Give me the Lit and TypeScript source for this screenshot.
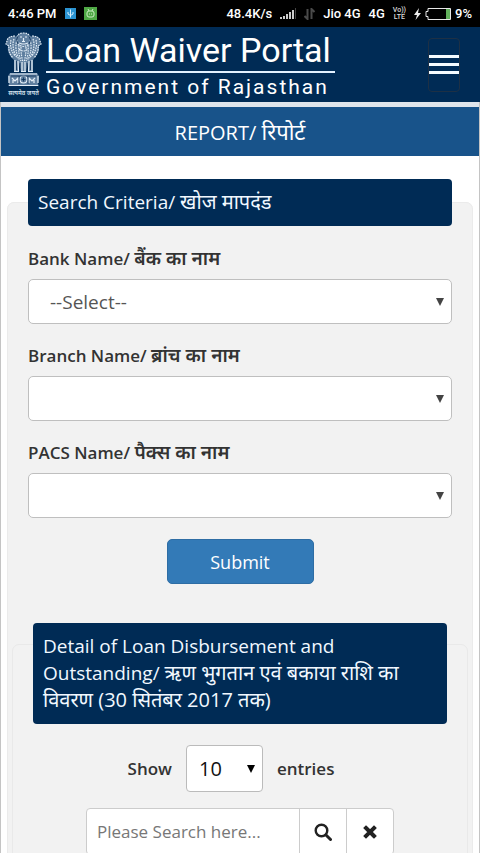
import { LitElement, html, css } from "lit";
import { customElement } from "lit/decorators.js";

const arrow = html`<svg class="arrow" viewBox="0 0 8 8" aria-hidden="true"><path d="M0 0H8L4 8Z" /></svg>`;

const fonts = css`
  * {
    box-sizing: border-box;
  }
  button,
  input,
  select {
    font-family: inherit;
    margin: 0;
  }
`;

@customElement("status-bar")
class StatusBar extends LitElement {
  static styles = [
    fonts,
    css`
      :host {
        display: flex;
        justify-content: space-between;
        align-items: center;
        height: 27px;
        padding: 0 8px;
        background: #000;
        color: #fff;
        font: 500 13px/20px Roboto, sans-serif;
        white-space: nowrap;
      }
      .group {
        display: flex;
        align-items: center;
        gap: 8px;
      }
      .group svg {
        display: block;
        flex: none;
      }
      .power {
        display: flex;
        align-items: center;
        gap: 4px;
      }
      .volte {
        font-size: 7px;
        line-height: 7px;
        text-align: center;
        color: #ddd;
      }
      .volte span {
        display: block;
      }
    `,
  ];
  render() {
    return html`
      <div class="group">
        <span>4:46 PM</span>
        <svg width="11" height="11" viewBox="0 0 11 11">
          <rect width="11" height="11" fill="#2b93d1" />
          <path d="M5.500 1.500V9.500M3 4V6L5.500 7.500L8 6V4" fill="none" stroke="#d8effc" />
        </svg>
        <svg width="13" height="13" viewBox="0 0 13 13">
          <rect width="13" height="13" fill="#4fa845" />
          <rect x="3" y="4" width="7" height="6" rx="2" fill="none" stroke="#cdeec5" />
          <path d="M4 2L5 4M9 2L8 4M5 7H6M7 7H8" stroke="#cdeec5" />
        </svg>
      </div>
      <div class="group">
        <span>48.4K/s</span>
        <svg width="16" height="11" viewBox="0 0 16 11">
          <path d="M0 9H2V11H0ZM3 8H5V11H3ZM6 6H8V11H6ZM9 4H11V11H9ZM12 2H14V11H12Z" fill="#ccc" />
          <path d="M15 0H16V11H15Z" fill="#444" />
        </svg>
        <svg width="11" height="12" viewBox="0 0 11 12" fill="none" stroke="#4a4a4a" stroke-width="2">
          <path d="M3.500 1V11L0.500 8M7.500 11V1L10.500 4" />
        </svg>
        <span>Jio 4G</span>
        <span>4G</span>
        <div class="volte"><span>Vo))</span><span>LTE</span></div>
        <div class="power">
          <svg width="7" height="12" viewBox="0 0 7 12"><path d="M5 0L0 7H3L1.500 12L7 5H4Z" fill="#eee" /></svg>
          <svg width="26" height="12" viewBox="0 0 26 12">
            <path d="M3 .5H25.500V11.500H3V8.500H1V3.500H3Z" fill="none" stroke="#e8e8e8" />
            <rect x="21" y="1" width="4" height="10" fill="#62b15c" />
          </svg>
          <span>9%</span>
        </div>
      </div>
    `;
  }
}

@customElement("site-header")
class SiteHeader extends LitElement {
  static styles = [
    fonts,
    css`
      :host {
        display: flex;
        align-items: center;
        height: 75px;
        padding: 0 20px 0 5px;
        background: #002b55;
        color: #fff;
        font-family: Roboto, sans-serif;
      }
      .emblem {
        display: flex;
        flex-direction: column;
        align-items: center;
        width: 37px;
        margin-right: 4px;
        color: #d3e1ee;
        font: 600 6px/8px "Noto Sans", sans-serif;
        white-space: nowrap;
      }
      h1,
      p {
        margin: 0;
        padding-right: 4px;
        font-weight: 400;
        white-space: nowrap;
      }
      h1 {
        padding-bottom: 2px;
        border-bottom: 2px solid #e2f1ff;
        font-size: 34px;
        line-height: 38px;
      }
      p {
        font-size: 21px;
        line-height: 24px;
        padding-top: 2px;
        letter-spacing: 2px;
      }
      .menu {
        display: flex;
        flex-direction: column;
        justify-content: center;
        gap: 5px;
        width: 32px;
        height: 54px;
        margin-left: auto;
        padding: 0;
        border: 1px solid #1d3045;
        border-radius: 4px;
        background: none;
      }
      .menu span {
        height: 3px;
        background: #f4fbff;
      }
    `,
  ];
  render() {
    return html`
      <div class="emblem">
        <svg width="37" height="57" viewBox="0 0 37 57" aria-hidden="true">
          <g fill="#5f7f9f">
            <path d="M12 5Q13 1 18.500 1Q24 1 25 5L28 4Q34 4 35 9L36 12L34 14Q35 20 30 25L28 28V40H24L23 31L21 40H16L14 31L13 40H9V28L6 25Q2 20 3 14L1 12L2 9Q3 4 9 4Z" />
            <path d="M5 41H32L34 44L33 52L34 54H3L4 52L3 44Z" />
          </g>
          <g fill="none" stroke="#e4eef7" stroke-width="1.200" stroke-dasharray="1.600 .9">
            <path d="M12 5Q13 1 18.500 1Q24 1 25 5M10 4Q3 4 2 9L1 12L4 14Q3 20 8 26M27 4Q34 4 35 9L36 12L33 14Q34 20 29 26" />
            <path d="M6 8Q4 16 10 24M31 8Q33 16 27 24M9 7Q6 15 12 26M28 7Q31 15 25 26M12 8Q9 16 14 28M25 8Q28 16 23 28" />
            <path d="M14 13Q13 22 16 29M23 13Q24 22 21 29M16 15Q16 24 18 30M21 15Q21 24 19 30M13 12Q18.500 17 24 12M14 17Q18.500 21 23 17" />
          </g>
          <g fill="none" stroke="#e4eef7" stroke-width="1.200">
            <path d="M15 5H17M20 5H22M17 9.500H20M18.500 6V9M14 11L17 12H20L23 11" />
            <path d="M10 28V39M13 29L13.500 39M27 28V39M24 29L23.500 39M17 30V39M20 30V39M9 39.500H14M16 39.500H21M23 39.500H28" />
            <path d="M5 42H32M4 53.500H33M4 44V51M33 44V51" />
            <path d="M7 46L10 49L13 46V51M8 51V48M30 46L27 49L24 46V51M29 51V48" />
            <circle cx="18.500" cy="47.500" r="3.500" />
          </g>
          <g stroke="#0b2f57" fill="none">
            <path d="M13 4Q10 8 13 12M24 4Q27 8 24 12M15 31V38M22 31V38M11.500 29V38M25.500 29V38M6 44H31" stroke-width=".8" />
            <path d="M14 44V52M23 44V52M18.500 45.500V49.500M16.500 47.500H20.500" stroke-width=".8" />
          </g>
        </svg>
        <span lang="hi">सत्यमेव जयते</span>
      </div>
      <div>
        <h1>Loan Waiver Portal</h1>
        <p>Government of Rajasthan</p>
      </div>
      <button class="menu" aria-label="Menu"><span></span><span></span><span></span></button>
    `;
  }
}

@customElement("select-field")
class SelectField extends LitElement {
  static properties = { english: {}, hindi: {}, choice: {} };
  declare english: string;
  declare hindi: string;
  declare choice: string;
  static styles = [
    fonts,
    css`
      :host {
        display: block;
      }
      label {
        display: block;
        height: 26px;
        margin-bottom: 8px;
        font-size: 17px;
        line-height: 26px;
        font-weight: 600;
      }
      .hindi {
        font-size: 19px;
      }
      .box {
        display: grid;
        grid-template-columns: 1fr 16px;
        align-items: center;
      }
      select {
        grid-area: 1 / 1 / 2 / 3;
        appearance: none;
        width: 100%;
        height: 45px;
        padding: 0 21px;
        border: 1px solid #bfbfbf;
        border-radius: 5px;
        background: #fff;
        color: #555;
        font-size: 19px;
      }
      .arrow {
        grid-area: 1 / 2;
        width: 8px;
        height: 8px;
        fill: #444;
        pointer-events: none;
      }
    `,
  ];
  render() {
    return html`
      <label for="field">${this.english} <span class="hindi" lang="hi">${this.hindi}</span></label>
      <div class="box">
        <select id="field"><option>${this.choice}</option></select>
        ${arrow}
      </div>
    `;
  }
}

@customElement("app-root")
class AppRoot extends LitElement {
  static styles = [
    fonts,
    css`
      :host {
        display: block;
        background: #fff;
        color: #333;
        font-family: "Open Sans", "Noto Sans", sans-serif;
      }
      .page {
        border: solid #c4c4c4;
        border-width: 0 1px;
      }
      .title {
        margin: 0;
        padding: 12px 0;
        border-top: 5px solid #dfe5ec;
        background: #18538a;
        color: #fff;
        font-size: 20px;
        line-height: 25px;
        height: 54px;
        font-weight: 400;
        text-align: center;
      }
      .title .hindi {
        font-size: 22px;
      }
      .criteria {
        min-width: 0;
        margin: 23px 6px 0;
        padding: 0 4px 24px;
        border: 1px solid #ebebeb;
        border-radius: 7px;
        background: #f2f2f2;
      }
      .caption {
        padding: 10px;
        border-radius: 4px;
        background: #002b55;
        color: #f1f8ff;
        font-size: 19px;
        line-height: 27px;
        font-weight: 400;
      }
      .caption .hindi {
        font-size: 20px;
        line-height: 20px;
      }
      legend.caption {
        width: calc(100% - 32px);
        margin: 0 16px;
      }
      .fields {
        display: grid;
        gap: 18px;
        padding: 19px 16px 0;
      }
      .submit {
        display: block;
        width: 147px;
        height: 45px;
        margin: 21px auto 0;
        border: 1px solid #2e6da4;
        border-radius: 5px;
        background: #337ab7;
        color: #fff;
        font-size: 18px;
      }
      .detail {
        margin-top: 60px;
        padding: 0 20px 24px;
        border: 1px solid #e9e9e9;
        border-radius: 7px;
      }
      .detail .caption {
        margin: -22px 0 0;
      }
      .length {
        display: flex;
        justify-content: center;
        align-items: center;
        gap: 14px;
        margin: 21px 18px 16px 0;
        font-size: 17px;
        line-height: 26px;
        font-weight: 600;
      }
      .count {
        display: grid;
        grid-template-columns: 1fr 16px;
        align-items: center;
      }
      .count select {
        grid-area: 1 / 1 / 2 / 3;
        appearance: none;
        width: 77px;
        height: 47px;
        padding: 0 12px;
        border: 1px solid #bbb;
        border-radius: 4px;
        background: #fff;
        color: #111;
        font-size: 20px;
      }
      .count .arrow {
        grid-area: 1 / 2;
        width: 8px;
        height: 8px;
        fill: #000;
        pointer-events: none;
      }
      .search {
        display: flex;
        width: 308px;
        max-width: 100%;
        height: 47px;
        margin: 0 auto;
        border: 1px solid #ccc;
        border-radius: 4px;
        background: #fff;
        overflow: hidden;
      }
      .search input {
        flex: 1;
        min-width: 0;
        padding: 0 10px;
        border: 0;
        background: none;
        font-size: 17px;
      }
      .search input::placeholder {
        color: #777;
      }
      .search button {
        display: grid;
        place-items: center;
        width: 47px;
        padding: 0;
        border: 0;
        border-left: 1px solid #ccc;
        background: none;
      }
    `,
  ];
  render() {
    return html`
      <status-bar></status-bar>
      <site-header></site-header>
      <main class="page">
        <h2 class="title">REPORT/ <span class="hindi" lang="hi">रिपोर्ट</span></h2>
        <fieldset class="criteria">
          <legend class="caption">Search Criteria/ <span class="hindi" lang="hi">खोज मापदंड</span></legend>
          <div class="fields">
            <select-field .english=${"Bank Name/"} .hindi=${"बैंक का नाम"} .choice=${"--Select--"}></select-field>
            <select-field .english=${"Branch Name/"} .hindi=${"ब्रांच का नाम"} .choice=${""}></select-field>
            <select-field .english=${"PACS Name/"} .hindi=${"पैक्स का नाम"} .choice=${""}></select-field>
          </div>
          <button class="submit">Submit</button>
          <section class="detail">
            <h3 class="caption">
              Detail of Loan Disbursement and Outstanding/
              <span class="hindi" lang="hi">ऋण भुगतान एवं बकाया राशि का विवरण (30 सितंबर 2017 तक)</span>
            </h3>
            <div class="length">
              <label for="count">Show</label>
              <div class="count">
                <select id="count"><option>10</option></select>
                ${arrow}
              </div>
              <span>entries</span>
            </div>
            <div class="search">
              <input type="text" placeholder="Please Search here..." aria-label="Search" />
              <button aria-label="Search">
                <svg width="18" height="18" viewBox="0 0 18 18" fill="none" stroke="#222">
                  <circle cx="7.500" cy="7.500" r="5.800" stroke-width="2.400" />
                  <path d="M12 12L16.500 16.500" stroke-width="3" stroke-linecap="round" />
                </svg>
              </button>
              <button aria-label="Clear">
                <svg width="14" height="14" viewBox="0 0 14 14">
                  <path d="M3 3L11 11M11 3L3 11" stroke="#222" stroke-width="4" stroke-linecap="square" />
                </svg>
              </button>
            </div>
          </section>
        </fieldset>
      </main>
    `;
  }
}
